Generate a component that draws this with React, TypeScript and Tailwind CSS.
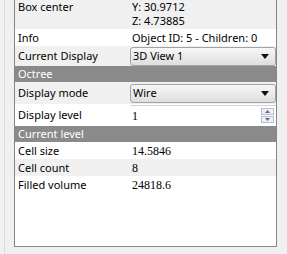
import React from "react"

const SANS = "font-['Noto_Sans',sans-serif]"

function Row({ label, children, gray, h }: { label: string; children: React.ReactNode; gray?: boolean; h: string }) {
  return (
    <div className={`flex items-center ${h} ${gray ? "bg-[#f0f0f0]" : "bg-white"}`}>
      <div className="w-[115px] shrink-0 pl-[3px] text-black">{label}</div>
      <div className="flex-1 flex items-center h-full">{children}</div>
    </div>
  )
}

function Header({ title, h }: { title: string; h: string }) {
  return (
    <div className={`flex items-center ${h} bg-[#8a8a8a] pl-[3px] text-white`}>{title}</div>
  )
}

function Combo({ value }: { value: string }) {
  return (
    <div className="flex items-center justify-between w-full h-[19px] rounded-[3px] border border-[#a3a3a3] bg-gradient-to-b from-[#f7f7f7] to-[#dedede] pl-[2px] pr-[6px]">
      <span>{value}</span>
      <svg width="8" height="5" viewBox="0 0 8 5">
        <polygon points="0,0 8,0 4,5" fill="#111" />
      </svg>
    </div>
  )
}

function SpinBox({ value }: { value: string }) {
  return (
    <div className="flex items-center justify-between w-full h-[20px] border-t border-[#d5d5d5] bg-white pl-[2px] pr-[2px]">
      <span className="font-['Liberation_Serif',serif] text-[12px]">{value}</span>
      <div className="flex flex-col gap-[1px]">
        <div className="w-[13px] h-[7px] border border-[#b8bdd0] bg-[#eef0f6] flex items-center justify-center">
          <svg width="5" height="3" viewBox="0 0 5 3"><polygon points="0,3 5,3 2.5,0" fill="#5a6a9a" /></svg>
        </div>
        <div className="w-[13px] h-[7px] border border-[#b8bdd0] bg-[#eef0f6] flex items-center justify-center">
          <svg width="5" height="3" viewBox="0 0 5 3"><polygon points="0,0 5,0 2.5,3" fill="#5a6a9a" /></svg>
        </div>
      </div>
    </div>
  )
}

export default function App() {
  return (
    <div className={`w-[287px] h-[254px] bg-[#f0f0f0] flex ${SANS} text-[11px] leading-[14px]`}>
      {/* left edge line */}
      <div className="w-[14px] shrink-0 flex">
        <div className="ml-[4px] w-px h-full bg-[#dadada]" />
      </div>

      {/* property grid */}
      <div className="w-[263px] h-[247px] shrink-0 bg-white border-l border-r border-b border-[#858585] overflow-hidden">
        <div className="flex h-[29px] bg-[#f0f0f0]">
          <div className="w-[115px] shrink-0 pl-[3px]">Box center</div>
          <div className="flex flex-col pl-[2px]">
            <span>Y: 30.9712</span>
            <span>Z: 4.73885</span>
          </div>
        </div>
        <Row label="Info" h="h-[17px]">
          <span className="pl-[2px]">Object ID: 5 - Children: 0</span>
        </Row>
        <Row label="Current Display" h="h-[20px]" gray>
          <Combo value="3D View 1" />
        </Row>

        <Header title="Octree" h="h-[16px]" />
        <Row label="Display mode" h="h-[22px]" gray>
          <Combo value="Wire" />
        </Row>
        <Row label="Display level" h="h-[22px]">
          <SpinBox value="1" />
        </Row>

        <Header title="Current level" h="h-[16px]" />
        <Row label="Cell size" h="h-[17px]">
          <span className="pl-[2px] font-['Liberation_Serif',serif] text-[12px]">14.5846</span>
        </Row>
        <Row label="Cell count" h="h-[17px]" gray>
          <span className="pl-[2px] font-['Liberation_Serif',serif] text-[12px]">8</span>
        </Row>
        <Row label="Filled volume" h="h-[17px]">
          <span className="pl-[2px] font-['Liberation_Serif',serif] text-[12px]">24818.6</span>
        </Row>
      </div>
    </div>
  )
}
